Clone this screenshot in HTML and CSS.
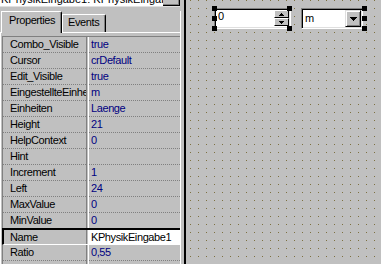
FILE: index.html
```html
<!DOCTYPE html>
<html lang="de">
<head>
    <meta charset="UTF-8">
    <title>Objektinspektor - KPhysikEingabe1</title>
    <link rel="stylesheet" href="styles.css">
</head>
<body>
    <!-- Objektinspektor -->
    <div class="inspector">
        <div class="obj-select">
            <div class="obj-name">KPhysikEingabe1: KPhysikEingabe</div>
            <div class="obj-btn"></div>
        </div>

        <div class="tabs-area">
            <div class="tabs">
                <div class="tab tab-props active">Properties</div>
                <div class="tab tab-events">Events</div>
            </div>

            <div class="sheet">
                <div class="grid">
                    <div class="row"><div class="prop">Combo_Visible</div><div class="val">true</div></div>
                    <div class="row"><div class="prop">Cursor</div><div class="val">crDefault</div></div>
                    <div class="row"><div class="prop">Edit_Visible</div><div class="val">true</div></div>
                    <div class="row"><div class="prop">EingestellteEinheit</div><div class="val">m</div></div>
                    <div class="row"><div class="prop">Einheiten</div><div class="val">Laenge</div></div>
                    <div class="row"><div class="prop">Height</div><div class="val">21</div></div>
                    <div class="row"><div class="prop">HelpContext</div><div class="val">0</div></div>
                    <div class="row"><div class="prop">Hint</div><div class="val"></div></div>
                    <div class="row"><div class="prop">Increment</div><div class="val">1</div></div>
                    <div class="row"><div class="prop">Left</div><div class="val">24</div></div>
                    <div class="row"><div class="prop">MaxValue</div><div class="val">0</div></div>
                    <div class="row"><div class="prop">MinValue</div><div class="val">0</div></div>
                    <div class="row sel"><div class="prop">Name</div><div class="val">KPhysikEingabe1</div></div>
                    <div class="row"><div class="prop">Ratio</div><div class="val">0,55</div></div>
                    <div class="row"><div class="prop"></div><div class="val"></div></div>
                </div>
            </div>
        </div>
    </div>

    <!-- Formular im Designer -->
    <div class="form">
        <svg class="form-dots" width="100%" height="100%">
            <defs>
                <pattern id="dots" width="8" height="8" patternUnits="userSpaceOnUse">
                    <rect x="4" y="0" width="1" height="1" fill="#7d7040"/>
                </pattern>
            </defs>
            <rect width="100%" height="100%" fill="url(#dots)"/>
        </svg>

        <div class="component">
            <div class="spin-edit">
                <span class="edit-text">0</span>
                <div class="spin">
                    <div class="spin-btn">
                        <svg width="5" height="3"><path d="M2 0h1v1H2zM1 1h3v1H1zM0 2h5v1H0z"/></svg>
                    </div>
                    <div class="spin-btn">
                        <svg width="5" height="3"><path d="M0 0h5v1H0zM1 1h3v1H1zM2 2h1v1H2z"/></svg>
                    </div>
                </div>
            </div>
            <div class="combo">
                <span class="combo-text">m</span>
                <div class="drop-btn">
                    <svg width="7" height="4"><path d="M0 0h7v1H0zM1 1h5v1H1zM2 2h3v1H2zM3 3h1v1H3z"/></svg>
                </div>
            </div>

            <!-- Markierungspunkte -->
            <div class="handle h-tl"></div>
            <div class="handle h-tm"></div>
            <div class="handle h-tr"></div>
            <div class="handle h-ml"></div>
            <div class="handle h-mr"></div>
            <div class="handle h-bl"></div>
            <div class="handle h-bm"></div>
            <div class="handle h-br"></div>
        </div>
    </div>
</body>
</html>
```

FILE: styles.css
```css
* {
    margin: 0;
    padding: 0;
    box-sizing: border-box;
}

body {
    display: flex;
    width: 381px;
    height: 264px;
    overflow: hidden;
    background: #c0c0c0;
    color: #000;
    font-family: "Liberation Sans", Arial, sans-serif;
    font-size: 11px;
    letter-spacing: -0.4px;
}

/* Objektinspektor */
.inspector {
    width: 184px;
    flex-shrink: 0;
    display: flex;
    flex-direction: column;
}

.obj-select {
    display: flex;
    width: 180px;
    height: 17px;
    margin-top: -10px;
    border-bottom: 1px solid #dfdfdf;
}

.obj-name {
    flex: 1;
    background: #fff;
    padding: 3px 0 0 1px;
    line-height: 13px;
    letter-spacing: 0;
    white-space: nowrap;
    overflow: hidden;
}

.obj-btn {
    width: 17px;
    background: #c0c0c0;
    border-right: 1px solid #000;
    border-bottom: 1px solid #000;
    box-shadow: inset -1px -1px #808080;
}

.tabs-area {
    flex: 1;
    width: 181px;
    margin-top: 4px;
    border-right: 1px solid #fff;
    display: flex;
    flex-direction: column;
}

/* Reiter */
.tabs {
    display: flex;
    align-items: flex-end;
    height: 21px;
    padding-left: 1px;
}

.tab {
    height: 18px;
    border: 1px solid #fff;
    border-bottom: 0;
    border-right-color: #000;
    border-top-right-radius: 2px;
    box-shadow: inset -1px 0 #808080;
    padding-top: 1px;
    line-height: 13px;
}

.tab-props {
    width: 61px;
    padding-left: 7px;
}

.tab-events {
    width: 44px;
    padding-left: 5px;
}

.tab.active {
    position: relative;
    z-index: 1;
    height: 22px;
    margin-bottom: -1px;
    padding-top: 2px;
    background: #c0c0c0;
}

.sheet {
    flex: 1;
    border-top: 1px solid #fff;
    border-left: 1px solid #fff;
    padding: 3px 0 0 1px;
}

/* Eigenschaftsliste */
.grid {
    border-top: 1px solid #808080;
    border-left: 1px solid #808080;
}

.row {
    display: flex;
    height: 16px;
}

.prop,
.val {
    line-height: 15px;
    white-space: nowrap;
    overflow: hidden;
    background-image: linear-gradient(to right, #808080 1px, transparent 1px);
    background-size: 2px 1px;
    background-repeat: repeat-x;
    background-position: 0 15px;
}

.prop {
    width: 84px;
    flex-shrink: 0;
    padding-left: 7px;
    border-right: 1px solid #808080;
}

.val {
    flex: 1;
    margin-left: 1px;
    padding-left: 2px;
    border-left: 1px solid #fff;
    color: #000080;
}

.row.sel {
    position: relative;
    height: 17px;
    margin: -1px 0 0 -1px;
    border-top: 2px solid #000;
    border-left: 2px solid #000;
    border-bottom: 1px solid #fff;
}

.row.sel .prop,
.row.sel .val {
    line-height: 14px;
    background-image: none;
}

.row.sel .prop {
    width: 83px;
    padding-left: 6px;
}

.row.sel .val {
    background: #fff;
    color: #000;
}

/* Formular */
.form {
    flex: 1;
    position: relative;
    border-left: 2px solid #000;
}

.form-dots {
    position: absolute;
    left: 0;
    top: 0;
}

.component {
    position: absolute;
    left: 28px;
    top: 8px;
    width: 151px;
    height: 21px;
    display: flex;
    gap: 10px;
}

.spin-edit,
.combo {
    display: flex;
    height: 21px;
    background: #fff;
    border: 1px solid;
    border-color: #808080 #fff #fff #808080;
    box-shadow: inset 1px 1px #000, inset -1px -1px #dfdfdf;
}

.spin-edit {
    width: 77px;
}

.edit-text {
    flex: 1;
    padding: 1px 0 0 3px;
    line-height: 13px;
}

.spin {
    width: 15px;
    height: 16px;
    margin: 1px 1px 0 0;
}

.spin-btn {
    height: 8px;
    display: flex;
    align-items: center;
    justify-content: center;
    background: #c0c0c0;
    border-top: 1px solid #fff;
    border-left: 1px solid #fff;
    border-right: 1px solid #000;
    border-bottom: 1px solid #000;
}

.spin-btn svg,
.drop-btn svg {
    display: block;
}

.combo {
    width: 62px;
    padding: 1px;
}

.combo-text {
    flex: 1;
    padding: 2px 0 0 2px;
    line-height: 13px;
}

.drop-btn {
    width: 16px;
    height: 17px;
    display: flex;
    align-items: center;
    justify-content: center;
    background: #c0c0c0;
    border: 1px solid;
    border-color: #dfdfdf #000 #000 #dfdfdf;
    box-shadow: inset 1px 1px #fff, inset -1px -1px #808080;
}

/* Auswahlpunkte */
.handle {
    position: absolute;
    width: 5px;
    height: 5px;
    background: #000;
}

.h-tl, .h-tm, .h-tr { top: -2px; }
.h-ml, .h-mr { top: 8px; }
.h-bl, .h-bm, .h-br { top: 18px; }
.h-tl, .h-ml, .h-bl { left: -2px; }
.h-tm, .h-bm { left: 73px; }
.h-tr, .h-mr, .h-br { left: 148px; }
```
